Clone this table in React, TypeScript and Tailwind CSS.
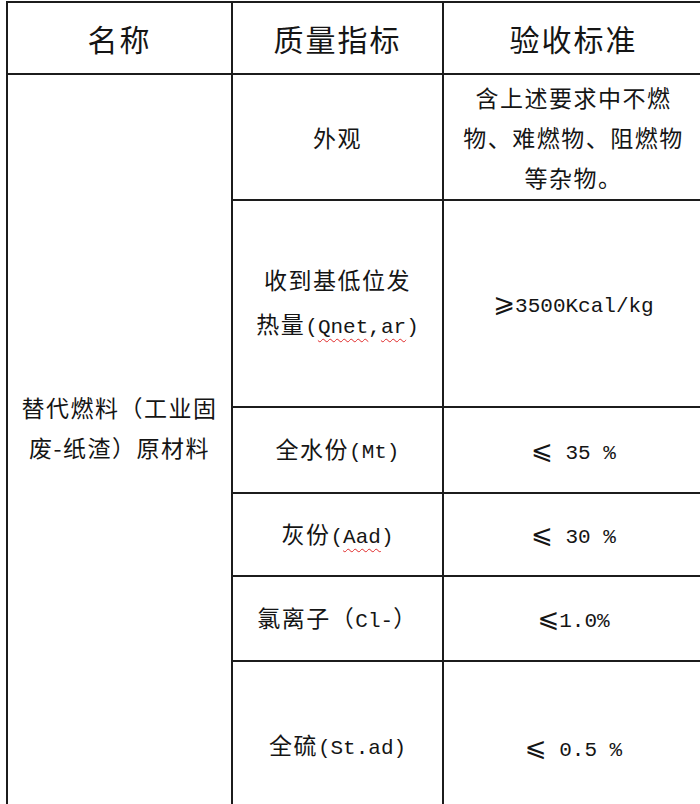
import React from 'react';

const cell = 'flex items-center justify-center text-center border-r-2 border-b-2 border-[#1c1c1c]';
const body = "font-['Noto_Sans_CJK_SC',sans-serif] text-[23px] tracking-[1.5px] text-[#151515]";
const head = "font-['Noto_Sans_CJK_SC',sans-serif] text-[30px] tracking-[2px] text-[#151515]";

// half-width latin parts, like SimSun's ASCII glyphs
const Latin: React.FC<{ children: React.ReactNode; wavy?: boolean }> = ({ children, wavy }) => (
  <span
    className={
      "font-['Liberation_Mono',monospace] text-[21px] tracking-normal " +
      (wavy ? 'underline decoration-wavy decoration-[#e02a2a] decoration-1 underline-offset-[5px]' : '')
    }
  >
    {children}
  </span>
);

const Sym: React.FC<{ children: React.ReactNode }> = ({ children }) => (
  <span className="font-['DejaVu_Sans',sans-serif] text-[26px] tracking-normal">{children}</span>
);

export default function App() {
  return (
    <div className="w-[700px] h-[804px] overflow-hidden bg-white">
      <div className="ml-[6px] mt-[1px] w-[699px] grid grid-cols-[225px_211px_261px] grid-rows-[72px_126px_207px_86px_83px_85px_172px] border-l-2 border-t-2 border-[#1c1c1c]">
        {/* header */}
        <div className={`${cell} ${head}`}>名称</div>
        <div className={`${cell} ${head}`}>质量指标</div>
        <div className={`${cell} ${head}`}>验收标准</div>

        {/* name column, spans all data rows */}
        <div className={`${cell} ${body} row-span-6 leading-[40px] pb-[54px]`}>
          <p>
            替代燃料（工业固
            <br />
            废-纸渣）原材料
          </p>
        </div>

        <div className={`${cell} ${body}`}>外观</div>
        <div className={`${cell} ${body} leading-[40px] whitespace-nowrap`}>
          <p>
            含上述要求中不燃
            <br />
            物、难燃物、阻燃物
            <br />
            等杂物。
          </p>
        </div>

        <div className={`${cell} ${body} leading-[44px]`}>
          <p>
            收到基低位发
            <br />
            热量<Latin>(</Latin>
            <Latin wavy>Qnet</Latin>
            <Latin>,</Latin>
            <Latin wavy>ar</Latin>
            <Latin>)</Latin>
          </p>
        </div>
        <div className={`${cell} ${body}`}>
          <p>
            <Sym>⩾</Sym>
            <Latin>3500Kcal/kg</Latin>
          </p>
        </div>

        <div className={`${cell} ${body}`}>
          <p>
            全水份<Latin>(Mt)</Latin>
          </p>
        </div>
        <div className={`${cell} ${body}`}>
          <p>
            <Sym>⩽</Sym>
            <Latin> 35 %</Latin>
          </p>
        </div>

        <div className={`${cell} ${body}`}>
          <p>
            灰份<Latin>(</Latin>
            <Latin wavy>Aad</Latin>
            <Latin>)</Latin>
          </p>
        </div>
        <div className={`${cell} ${body}`}>
          <p>
            <Sym>⩽</Sym>
            <Latin> 30 %</Latin>
          </p>
        </div>

        <div className={`${cell} ${body}`}>
          <p>
            氯离子（<Latin>Cl-</Latin>）
          </p>
        </div>
        <div className={`${cell} ${body}`}>
          <p>
            <Sym>⩽</Sym>
            <Latin>1.0%</Latin>
          </p>
        </div>

        <div className={`${cell} ${body} pb-[2px]`}>
          <p>
            全硫<Latin>(St.ad)</Latin>
          </p>
        </div>
        <div className={`${cell} ${body}`}>
          <p>
            <Sym>⩽</Sym>
            <Latin> 0.5 %</Latin>
          </p>
        </div>
      </div>
    </div>
  );
}
